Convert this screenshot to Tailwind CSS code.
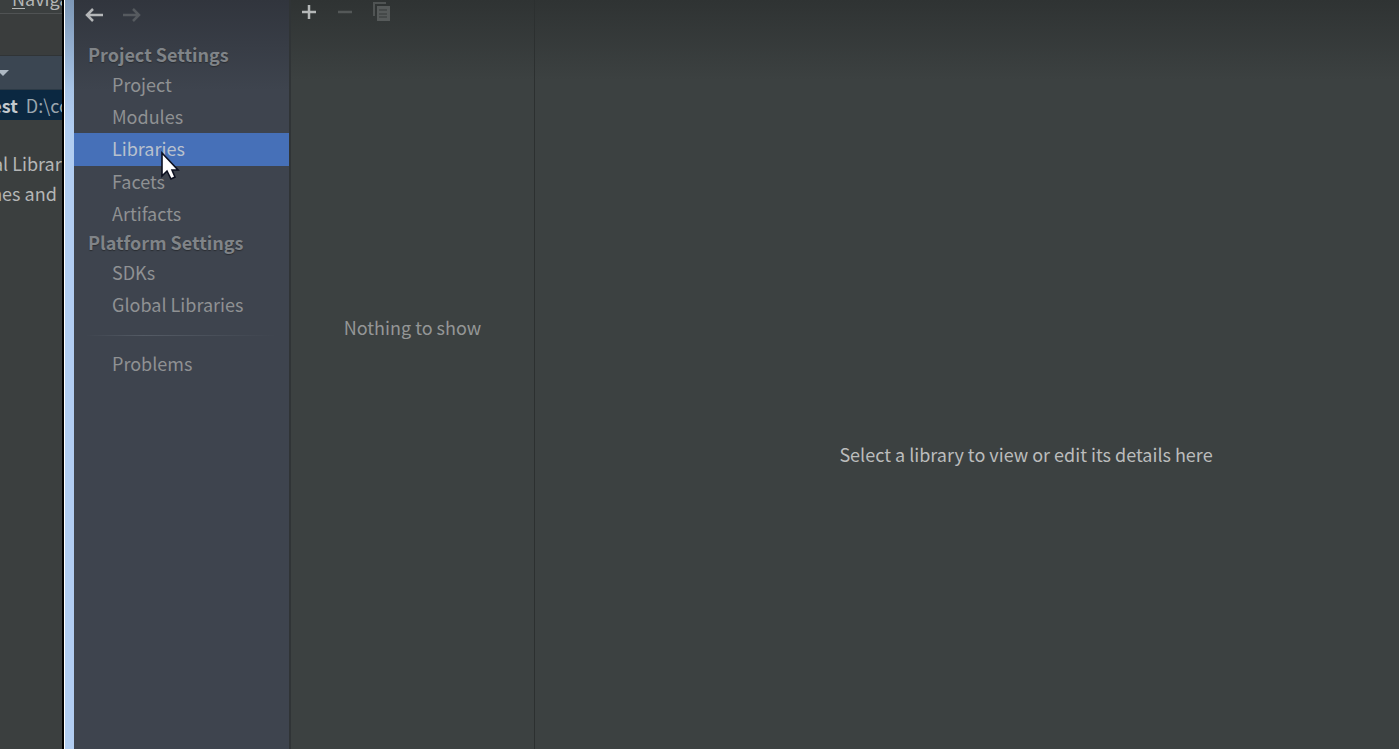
<!DOCTYPE html>
<html lang="en">
<head>
<meta charset="utf-8">
<title>Project Structure</title>
<script src="https://cdn.jsdelivr.net/npm/@tailwindcss/browser@4"></script>
</head>
<body class="relative flex h-screen overflow-hidden bg-[#3c4141] font-['Noto_Sans_CJK_SC','Noto_Sans',sans-serif] text-[18px] leading-[30px] text-[#8f9193]">
  <!-- Main IDE window, partly behind the dialog -->
  <div class="flex w-16 shrink-0 flex-col overflow-hidden border-r-2 border-black bg-[#3b3f3f] whitespace-nowrap text-[#b4b6b6]">
    <div class="h-3.5 border-b border-[#505354]"><button class="-mt-[18px] ml-3 block h-8"><span class="underline underline-offset-2">N</span>avigate</button></div>
    <div class="h-[42px] border-b border-[#303436] bg-[#3a3d3d]"></div>
    <div class="flex h-[34px] items-center border-b border-[#2c3a46] bg-[#3b4652]">
      <button aria-label="View options" class="-ml-1"><svg width="14" height="8" viewBox="0 0 14 8"><path d="M1 1h12L7 7z" fill="#aeb9c4"/></svg></button>
    </div>
    <div class="flex h-[30px] items-center gap-2 bg-[#0b2841]"><b class="-ml-4 text-[#c3c9ce]">test</b><span class="text-[#9aa5ae]">D:\code</span></div>
    <div class="-ml-[18px] pt-7"><p>nal Libraries</p><p>ches and</p></div>
  </div>
  <div class="w-2.5 shrink-0 border-l border-white bg-linear-to-b from-[#7d97b6] from-0% via-[#a8c4e6] via-12% to-[#b1cdf1] to-17%"></div>

  <!-- Settings categories -->
  <aside class="flex w-[217px] shrink-0 flex-col border-r-2 border-[#303436] bg-[#3e434c] bg-linear-to-b from-[#31353d] to-[#3e444e] to-[90px]">
    <div class="flex h-10 items-start gap-4 pt-1 pl-2.5">
      <button aria-label="Back" class="block"><svg width="21" height="21" viewBox="0 0 21 21" fill="none" stroke="#b5b7b9" stroke-width="2.5"><path d="M19 11H3M9 5l-6 6 6 6"/></svg></button>
      <button aria-label="Forward" class="block" disabled><svg width="21" height="21" viewBox="0 0 21 21" fill="none" stroke="#565a5f" stroke-width="2.5"><path d="M2 11h16M12 5l6 6-6 6"/></svg></button>
    </div>
    <nav class="flex flex-col">
      <h2 class="h-[29px] pl-3.5 leading-7 font-bold text-[#808488] [text-shadow:0_1px_1px_#2a2d32]">Project Settings</h2>
      <a href="#project" class="h-8 pl-[38px]">Project</a>
      <a href="#modules" class="h-8 pl-[38px]">Modules</a>
      <a href="#libraries" class="h-[33px] bg-[#4670b8] pl-[38px] text-[#b9c1cd]" aria-current="page">Libraries</a>
      <a href="#facets" class="h-8 pl-[38px]">Facets</a>
      <a href="#artifacts" class="h-[30px] pl-[38px]">Artifacts</a>
      <h2 class="h-[29px] pl-3.5 leading-7 font-bold text-[#808488] [text-shadow:0_1px_1px_#2a2d32]">Platform Settings</h2>
      <a href="#sdks" class="h-8 pl-[38px]">SDKs</a>
      <a href="#global" class="h-8 pl-[38px]">Global Libraries</a>
      <div class="mx-3 mt-3.5 mb-3 h-px bg-linear-to-r from-transparent via-[#545b65] via-30% to-transparent"></div>
      <a href="#problems" class="h-8 pl-[38px]">Problems</a>
    </nav>
  </aside>

  <!-- Library list -->
  <section class="flex w-[244px] shrink-0 flex-col border-r border-[#2c3030] bg-linear-to-b from-[#2f3333] to-[#3c4141] to-[80px]">
    <div class="flex h-6 items-center gap-4 pl-2">
      <button aria-label="Add" class="block"><svg width="20" height="20" viewBox="0 0 20 20"><path d="M10 3v14M3 10h14" stroke="#b5b8b8" stroke-width="2.5"/></svg></button>
      <button aria-label="Remove" class="block" disabled><svg width="20" height="20" viewBox="0 0 20 20"><path d="M3 10h14" stroke="#545858" stroke-width="2.5"/></svg></button>
      <button aria-label="Copy" class="block" disabled><svg width="20" height="20" viewBox="0 0 20 20"><path d="M3 14V1h12" fill="none" stroke="#505454" stroke-width="2"/><path d="M6 4h13v15H6z" fill="#565a5a"/><path d="M8 8h8M8 12h8M8 15h8" stroke="#343838" stroke-width="1"/></svg></button>
    </div>
    <p class="pt-[288px] text-center text-[#949696]">Nothing to show</p>
  </section>

  <!-- Library details -->
  <main class="flex min-w-0 grow flex-col items-center bg-linear-to-b from-[#2f3333] to-[#3c4141] to-[80px] pt-[439px] pl-[118px]">
    <p class="text-[#bbbcbc]">Select a library to view or edit its details here</p>
  </main>

  <svg class="absolute top-[151px] left-[160px]" width="20" height="30" viewBox="0 0 20 30" aria-hidden="true"><path d="M2 2v23l5-5 4 8 4-2-3-7h6z" fill="#fff" stroke="#0c1020" stroke-width="1.6"/></svg>
</body>
</html>
